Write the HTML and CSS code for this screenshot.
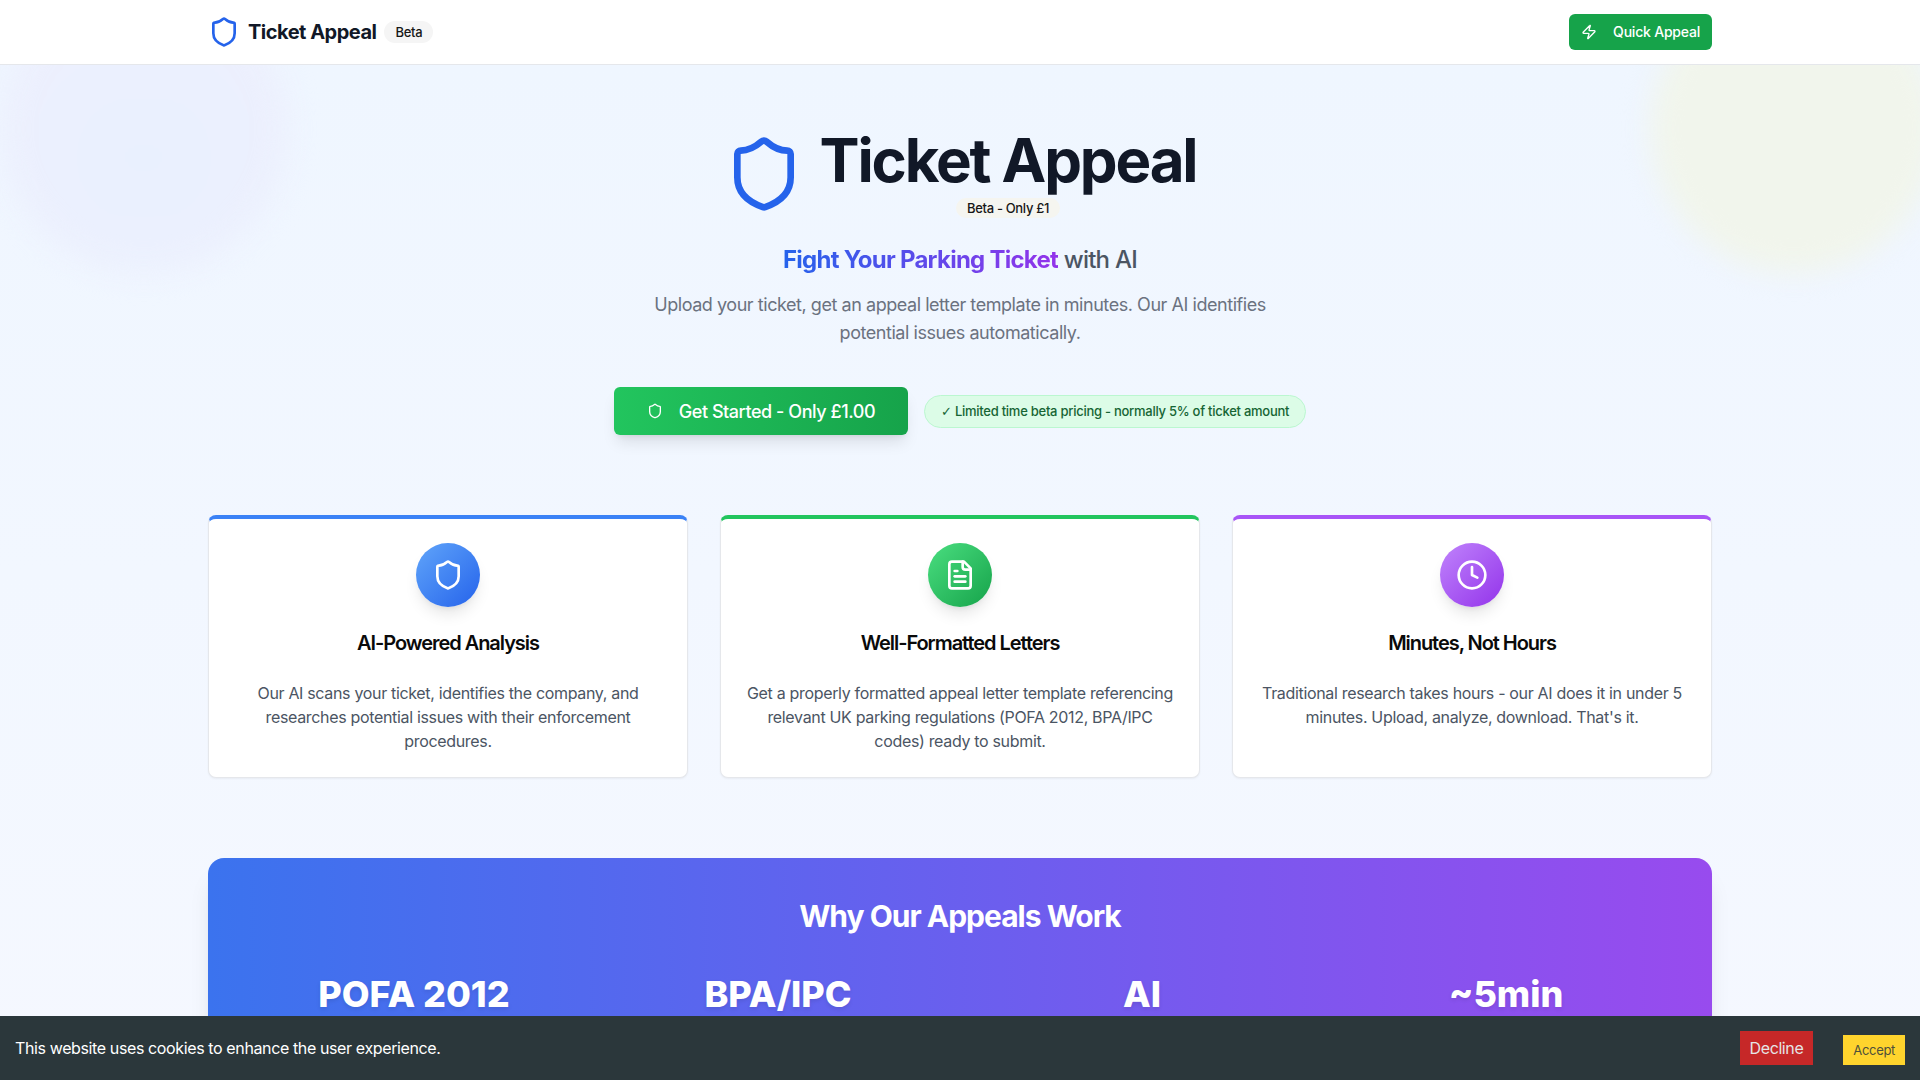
FILE: index.html
```html
<!DOCTYPE html>
<html lang="en">
<head>
<meta charset="utf-8">
<title>Ticket Appeal</title>
<link rel="stylesheet" href="styles.css">
</head>
<body>
<header class="topbar">
  <div class="topbar-inner">
    <div class="brand">
      <svg class="brand-icon" viewBox="0 0 24 24"><path d="M20 13c0 5-3.500 7.500-7.660 8.950a1 1 0 0 1-.67-.01C7.500 20.500 4 18 4 13V6a1 1 0 0 1 1-1c2 0 4.500-1.200 6.240-2.720a1.170 1.170 0 0 1 1.520 0C14.510 3.810 17 5 19 5a1 1 0 0 1 1 1z"/></svg>
      <span class="brand-name">Ticket Appeal</span>
      <span class="brand-badge">Beta</span>
    </div>
    <button class="quick-btn">
      <svg class="quick-icon" viewBox="0 0 24 24"><path d="M4 14a1 1 0 0 1-.78-1.630l9.900-10.200a.5.5 0 0 1 .86.460l-1.920 6.020A1 1 0 0 0 13 10h7a1 1 0 0 1 .78 1.630l-9.900 10.200a.5.5 0 0 1-.86-.460l1.920-6.020A1 1 0 0 0 11 14z"/></svg>
      Quick Appeal
    </button>
  </div>
</header>
<main class="page">
  <div class="blob blob-left"></div>
  <div class="blob blob-right"></div>
  <div class="wrap">
    <section class="hero">
      <div class="hero-title">
        <svg class="hero-icon" viewBox="0 0 24 24"><path d="M20 13c0 5-3.500 7.500-7.660 8.950a1 1 0 0 1-.67-.01C7.500 20.500 4 18 4 13V6a1 1 0 0 1 1-1c2 0 4.500-1.200 6.240-2.720a1.170 1.170 0 0 1 1.520 0C14.510 3.810 17 5 19 5a1 1 0 0 1 1 1z"/></svg>
        <div class="hero-name">
          <h1>Ticket Appeal</h1>
          <span class="hero-badge">Beta - Only £1</span>
        </div>
      </div>
      <h2 class="hero-sub"><span class="grad">Fight Your Parking Ticket</span> with AI</h2>
      <p class="hero-lead">Upload your ticket, get an appeal letter template in minutes. Our AI identifies potential issues automatically.</p>
      <div class="cta-row">
        <button class="cta">
          <svg class="cta-icon" viewBox="0 0 24 24"><path d="M20 13c0 5-3.500 7.500-7.660 8.950a1 1 0 0 1-.67-.01C7.500 20.500 4 18 4 13V6a1 1 0 0 1 1-1c2 0 4.500-1.200 6.240-2.720a1.170 1.170 0 0 1 1.520 0C14.510 3.810 17 5 19 5a1 1 0 0 1 1 1z"/></svg>
          Get Started - Only £1.00
        </button>
        <span class="promo"><span class="tick">✓</span> Limited time beta pricing - normally 5% of ticket amount</span>
      </div>
    </section>
    <section class="cards">
      <article class="card card-blue">
        <div class="disc disc-blue"><svg viewBox="0 0 24 24"><path d="M20 13c0 5-3.500 7.500-7.660 8.950a1 1 0 0 1-.67-.01C7.500 20.500 4 18 4 13V6a1 1 0 0 1 1-1c2 0 4.500-1.200 6.240-2.720a1.170 1.170 0 0 1 1.520 0C14.510 3.810 17 5 19 5a1 1 0 0 1 1 1z"/></svg></div>
        <h3>AI-Powered Analysis</h3>
        <p>Our AI scans your ticket, identifies the company, and researches potential issues with their enforcement procedures.</p>
      </article>
      <article class="card card-green">
        <div class="disc disc-green"><svg viewBox="0 0 24 24"><path d="M15 2H6a2 2 0 0 0-2 2v16a2 2 0 0 0 2 2h12a2 2 0 0 0 2-2V7z"/><path d="M14 2v4a2 2 0 0 0 2 2h4"/><path d="M10 9H8"/><path d="M16 13H8"/><path d="M16 17H8"/></svg></div>
        <h3>Well-Formatted Letters</h3>
        <p>Get a properly formatted appeal letter template referencing relevant UK parking regulations (POFA 2012, BPA/IPC codes) ready to submit.</p>
      </article>
      <article class="card card-purple">
        <div class="disc disc-purple"><svg viewBox="0 0 24 24"><circle cx="12" cy="12" r="10"/><path d="M12 6v6l4 2"/></svg></div>
        <h3>Minutes, Not Hours</h3>
        <p>Traditional research takes hours - our AI does it in under 5 minutes. Upload, analyze, download. That's it.</p>
      </article>
    </section>
    <section class="why">
      <h2>Why Our Appeals Work</h2>
      <div class="stats">
        <div class="stat">POFA 2012</div>
        <div class="stat">BPA/IPC</div>
        <div class="stat">AI</div>
        <div class="stat">~5min</div>
      </div>
    </section>
  </div>
</main>
<div class="cookie">
  <span class="cookie-text">This website uses cookies to enhance the user experience.</span>
  <div class="cookie-actions">
    <button class="decline">Decline</button>
    <button class="accept">Accept</button>
  </div>
</div>
</body>
</html>
```
FILE: styles.css
```css
* { box-sizing: border-box; letter-spacing: -.025em; }
html, body { margin: 0; height: 100%; overflow: hidden; }
body { font-family: Inter, "Liberation Sans", sans-serif; color: #111827; background: #eff6ff; }
svg { fill: none; stroke: currentColor; stroke-width: 2; stroke-linecap: round; stroke-linejoin: round; display: block; flex: none; }
button { font-family: inherit; border: 0; cursor: pointer; white-space: nowrap; }

.topbar { height: 65px; background: #fff; border-bottom: 1px solid #e5e7eb; }
.topbar-inner { width: 1504px; height: 64px; margin: 0 auto; display: flex; align-items: center; justify-content: space-between; }
.brand { display: flex; align-items: center; }
.brand-icon { width: 32px; height: 32px; color: #2563eb; margin-right: 8px; }
.brand-name { font-size: 20px; font-weight: 700; line-height: 28px; margin-right: 8px; }
.brand-badge { font-size: 13px; font-weight: 500; line-height: 16px; padding: 3px 11px; border-radius: 999px; background: #f5f5f5; color: #171717; }
.quick-btn { height: 36px; display: flex; align-items: center; padding: 0 12px 1px 12px; background: #16a34a; color: #fff; font-size: 14px; font-weight: 500; letter-spacing: -.015em; border-radius: 6px; }
.quick-icon { width: 16px; height: 16px; margin-right: 16px; }

.page { position: relative; height: 1015px; overflow: hidden; background: linear-gradient(180deg, #eff6ff 0%, #f5f8ff 100%); }
.blob { position: absolute; width: 288px; height: 288px; top: -80px; border-radius: 50%; filter: blur(14px); }
.blob-left { left: 0; background: radial-gradient(circle at 50% 60%, #e9f0fe, #eeeffd); }
.blob-right { left: 1650px; background: #f1f5ec; }
.wrap { position: relative; width: 1504px; margin: 0 auto; }

.hero { display: flex; flex-direction: column; align-items: center; padding-top: 71px; }
.hero-title { display: flex; align-items: center; gap: 16px; height: 76px; margin-bottom: 32px; }
.hero-icon { width: 80px; height: 80px; color: #2563eb; }
.hero-name { display: flex; flex-direction: column; align-items: center; }
.hero-name h1 { margin: -1px 0 0; font-size: 60px; font-weight: 700; line-height: 60px; color: #111827; letter-spacing: -2.15px; }
.hero-badge { font-size: 13px; font-weight: 500; line-height: 16px; padding: 2px 11px; border-radius: 999px; background: #f5f5f0; color: #171717; margin-top: 8px; }
.hero-sub { margin: 0 0 15px; font-size: 24px; line-height: 32px; font-weight: 500; color: #4b5563; letter-spacing: -.75px; }
.grad { font-weight: 700; letter-spacing: -.75px; background: linear-gradient(90deg, #2563eb, #9333ea); -webkit-background-clip: text; background-clip: text; color: transparent; }
.hero-lead { margin: 0 0 40px; width: 672px; text-align: center; font-size: 18px; line-height: 28px; color: #6b7280; }
.cta-row { display: flex; align-items: center; gap: 16px; }
.cta { height: 48px; display: flex; align-items: center; padding: 0 33px; gap: 16px; border-radius: 6px; color: #fff; font-size: 18px; font-weight: 500; background: linear-gradient(90deg, #22c55e, #16a34a); box-shadow: 0 10px 15px -3px rgba(0,0,0,.1), 0 4px 6px -4px rgba(0,0,0,.1); }
.cta-icon { width: 16px; height: 16px; }
.promo { font-size: 13px; font-weight: 500; line-height: 15px; letter-spacing: -.02em; padding: 8px 16px; border-radius: 999px; background: #dcfce7; border: 1px solid #bbf7d0; color: #166534; }
.tick { font-family: "DejaVu Sans", sans-serif; font-weight: 700; }

.cards { display: grid; grid-template-columns: repeat(3, 1fr); gap: 32px; margin-top: 80px; }
.card { background: #fff; border-radius: 8px; border: 1px solid #e5e7eb; border-top: 4px solid; padding: 24px; text-align: center; height: 263px; box-shadow: 0 1px 2px rgba(0,0,0,.05); }
.card-blue { border-top-color: #3b82f6; }
.card-green { border-top-color: #22c55e; }
.card-purple { border-top-color: #a855f7; }
.disc { width: 64px; height: 64px; margin: 0 auto 22px; border-radius: 50%; display: flex; align-items: center; justify-content: center; color: #fff; box-shadow: 0 10px 15px -3px rgba(0,0,0,.1), 0 4px 6px -4px rgba(0,0,0,.1); }
.disc svg { width: 32px; height: 32px; }
.disc-blue { background: linear-gradient(135deg, #60a5fa, #2563eb); }
.disc-green { background: linear-gradient(135deg, #4ade80, #16a34a); }
.disc-purple { background: linear-gradient(135deg, #c084fc, #9333ea); }
.card h3 { margin: 0 0 24px; font-size: 20px; line-height: 28px; font-weight: 600; color: #0a0a0a; letter-spacing: -1.05px; }
.card p { margin: 0; font-size: 16px; line-height: 24px; color: #4b5563; letter-spacing: -.33px; }

.why { margin-top: 80px; height: 300px; padding: 40px 48px; border-radius: 16px; background: linear-gradient(90deg, #3b73ee, #984bee); color: #fff; text-align: center; box-shadow: 0 20px 25px -5px rgba(0,0,0,.1), 0 8px 10px -6px rgba(0,0,0,.1); }
.why h2 { margin: 0 0 40px; font-size: 30px; line-height: 36px; font-weight: 700; letter-spacing: -1px; }
.stats { display: grid; grid-template-columns: repeat(4, 1fr); gap: 48px; }
.stat { font-size: 36px; line-height: 40px; font-weight: 800; letter-spacing: 0; text-shadow: 0 2px 4px rgba(0,0,0,.1); }

.cookie { position: fixed; left: 0; right: 0; bottom: 0; height: 64px; display: flex; align-items: center; justify-content: space-between; background: #2b373b; color: #fff; padding: 0 15px; }
.cookie-text { font-size: 16px; letter-spacing: -.38px; }
.cookie-actions { display: flex; align-items: flex-end; gap: 30px; }
.decline { height: 34px; padding: 0 10px; background: #c62828; color: #e5e5e5; font-size: 16px; }
.accept { height: 30px; padding: 0 10px; background: #ffd42d; color: #4e503b; font-size: 13px; }
```
